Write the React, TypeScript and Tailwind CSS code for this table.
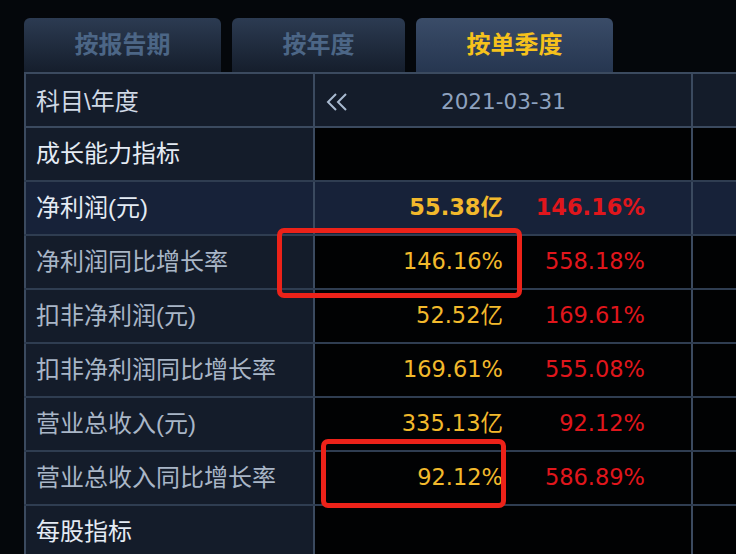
import React from 'react';

type Row = {
  label: string;
  strong?: boolean;
  highlight?: boolean;
  a?: string;
  b?: string;
  boldValues?: boolean;
};

const rows: Row[] = [
  { label: '成长能力指标', strong: true },
  { label: '净利润(元)', strong: true, highlight: true, a: '55.38亿', b: '146.16%', boldValues: true },
  { label: '净利润同比增长率', a: '146.16%', b: '558.18%' },
  { label: '扣非净利润(元)', a: '52.52亿', b: '169.61%' },
  { label: '扣非净利润同比增长率', a: '169.61%', b: '555.08%' },
  { label: '营业总收入(元)', a: '335.13亿', b: '92.12%' },
  { label: '营业总收入同比增长率', a: '92.12%', b: '586.89%' },
  { label: '每股指标', strong: true },
];

const font = { fontFamily: '"Liberation Sans", "Noto Sans CJK SC", sans-serif' };
const numFont = { fontFamily: '"DejaVu Sans", "Noto Sans CJK SC", sans-serif' };

function Tab({ label, active, width }: { label: string; active?: boolean; width: string }) {
  return (
    <div
      className={`${width} h-[54px] rounded-t-[6px] flex items-center justify-center text-[24px] font-bold ${
        active
          ? 'bg-gradient-to-b from-[#3a4c68] to-[#263650] text-[#f6c21c]'
          : 'bg-gradient-to-b from-[#2c3b52] to-[#151e2c] text-[#4c6686]'
      }`}
    >
      {label}
    </div>
  );
}

export default function App() {
  return (
    <div className="w-[736px] h-[554px] overflow-hidden bg-[#04070b] pl-[24px]" style={font}>
      <div className="flex gap-[11px] pt-[18px]">
        <Tab label="按报告期" width="w-[197px]" />
        <Tab label="按年度" width="w-[173px]" />
        <Tab label="按单季度" width="w-[197px]" active />
      </div>

      <div className="relative border-t-2 border-[#3b4a5f]">
        {/* header row */}
        <div className="flex h-[54px] border-b-2 border-[#3b4a5f] bg-[#141c2a]">
          <div className="w-[291px] pl-[10px] flex items-center pt-[4px] text-[24px] text-[#d0d9e6] border-l-2 border-r-2 border-[#3b4a5f]">
            科目\年度
          </div>
          <div className="w-[378px] flex items-center pt-[4px] border-r-2 border-[#3b4a5f]">
            <span className="pl-[10px] w-[126px] flex items-center">
              <svg width="24" height="20" viewBox="0 0 24 20" fill="none" stroke="#a9bad0" strokeWidth="2">
                <path d="M11 2 L3 10 L11 18" />
                <path d="M21 2 L13 10 L21 18" />
              </svg>
            </span>
            <span className="text-[21.5px] text-[#8ea2bf]" style={numFont}>
              2021-03-31
            </span>
          </div>
          <div className="flex-1" />
        </div>

        {rows.map((r) => (
          <div
            key={r.label}
            className={`flex h-[54px] border-b-2 border-[#2f3d51] ${r.highlight ? 'bg-[#172239]' : 'bg-[#010203]'}`}
          >
            <div
              className={`w-[291px] pl-[10px] flex items-center text-[24px] border-l-2 border-r-2 border-[#3b4a5f] ${
                r.highlight ? 'bg-[#172239]' : 'bg-[#141c2a]'
              } ${r.strong ? 'text-[#e4ebf4]' : 'text-[#a9b6c7]'}`}
            >
              {r.label}
            </div>
            <div className="w-[378px] flex items-center border-r-2 border-[#3b4a5f]" style={numFont}>
              {r.a && (
                <>
                  <span
                    className={`w-[188px] text-right text-[22.5px] text-[#f2b92c] ${r.boldValues ? 'font-bold' : ''}`}
                  >
                    {r.a}
                  </span>
                  <span
                    className={`w-[142px] text-right text-[22.5px] text-[#e0161c] ${r.boldValues ? 'font-bold' : ''}`}
                  >
                    {r.b}
                  </span>
                </>
              )}
            </div>
            <div className="flex-1" />
          </div>
        ))}

        {/* red annotation boxes */}
        <div className="absolute left-[253px] top-[154px] w-[245px] h-[70px] rounded-[7px] border-[5px] border-[#ec2219]" />
        <div className="absolute left-[297px] top-[365px] w-[185px] h-[69px] rounded-[7px] border-[5px] border-[#ec2219]" />
      </div>
    </div>
  );
}
